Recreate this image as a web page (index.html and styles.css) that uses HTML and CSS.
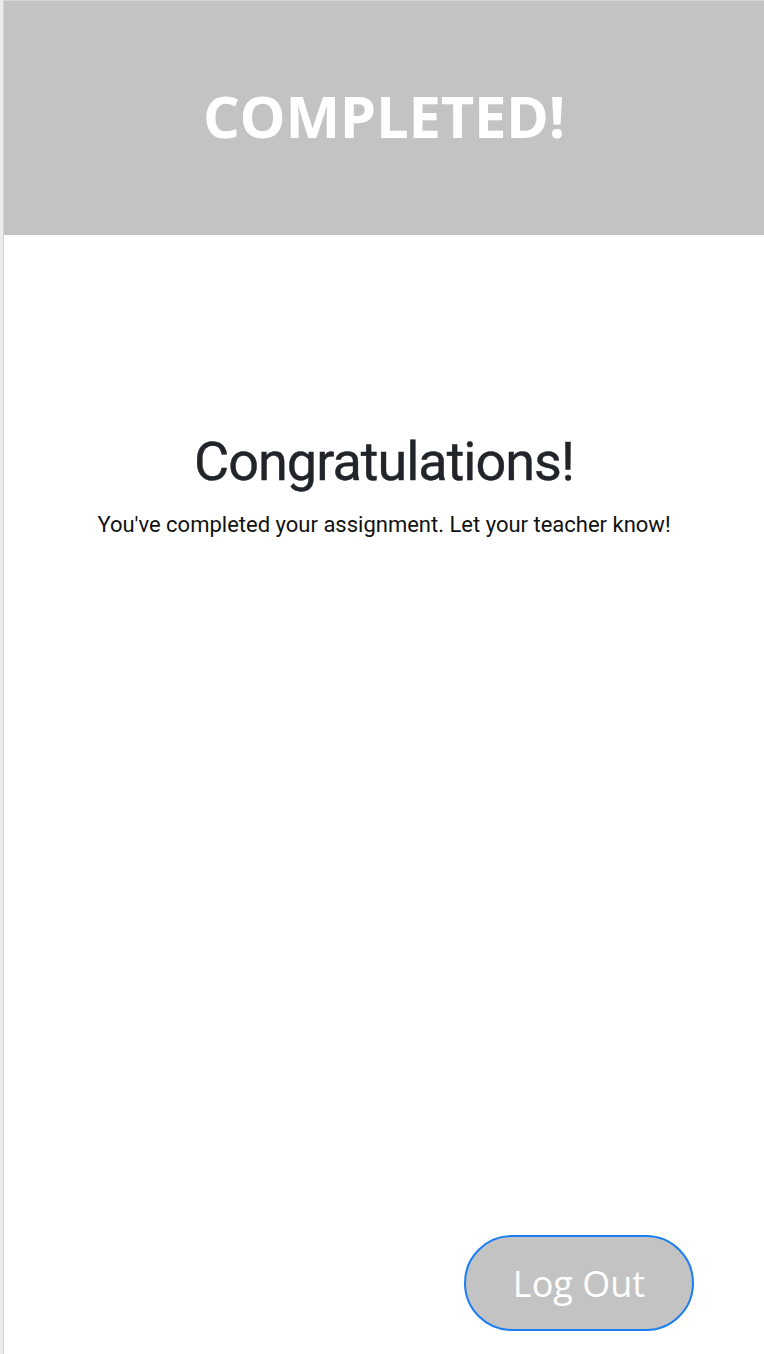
FILE: index.html
```html
<!DOCTYPE html>
<html lang="en">
<head>
<meta charset="utf-8">
<title>Completed</title>
<link rel="stylesheet" href="styles.css">
</head>
<body>
<div class="frame">
  <header class="banner">
    <h1 class="banner-title">COMPLETED!</h1>
  </header>
  <main class="content">
    <h2 class="congrats">Congratulations!</h2>
    <p class="message">You've completed your assignment. Let your teacher know!</p>
  </main>
  <footer class="actions">
    <button class="logout" type="button">Log Out</button>
  </footer>
</div>
</body>
</html>
```
FILE: styles.css
```css
html, body {
  margin: 0;
  padding: 0;
  background: #ffffff;
}
body {
  background: #ececec;
  padding-left: 3px;
}
.frame {
  min-height: 1353px;
  border-top: 1px solid #d6d6d6;
  border-left: 1px solid #d3d3d3;
  background: #ffffff;
  display: flex;
  flex-direction: column;
}
.banner {
  height: 234px;
  background: #c3c3c3;
  display: flex;
  align-items: center;
  justify-content: center;
}
.banner-title {
  margin: 0;
  color: #ffffff;
  font-family: "Open Sans", "Noto Sans", sans-serif;
  font-weight: 700;
  font-size: 58px;
  letter-spacing: -0.3px;
  line-height: 1;
  transform: translateY(-2px);
}
.content {
  padding-top: 195px;
  text-align: center;
  flex: 1;
}
.congrats {
  margin: 0;
  font-family: Roboto, "Liberation Sans", sans-serif;
  font-weight: 400;
  font-size: 54px;
  letter-spacing: -1px;
  line-height: 1.2;
  color: #212529;
  -webkit-text-stroke: 0.4px #212529;
}
.message {
  margin: 17px 0 0;
  font-family: Roboto, "Liberation Sans", sans-serif;
  font-size: 22px;
  color: #111111;
}
.actions {
  display: flex;
  justify-content: flex-end;
  padding: 0 70px 23px 0;
}
.logout {
  width: 230px;
  height: 96px;
  border-radius: 48px;
  border: 2px solid #1a7ef0;
  background: #c3c3c3;
  color: #ffffff;
  font-family: "Open Sans", "Noto Sans", sans-serif;
  font-size: 36px;
  padding: 0;
}
```
